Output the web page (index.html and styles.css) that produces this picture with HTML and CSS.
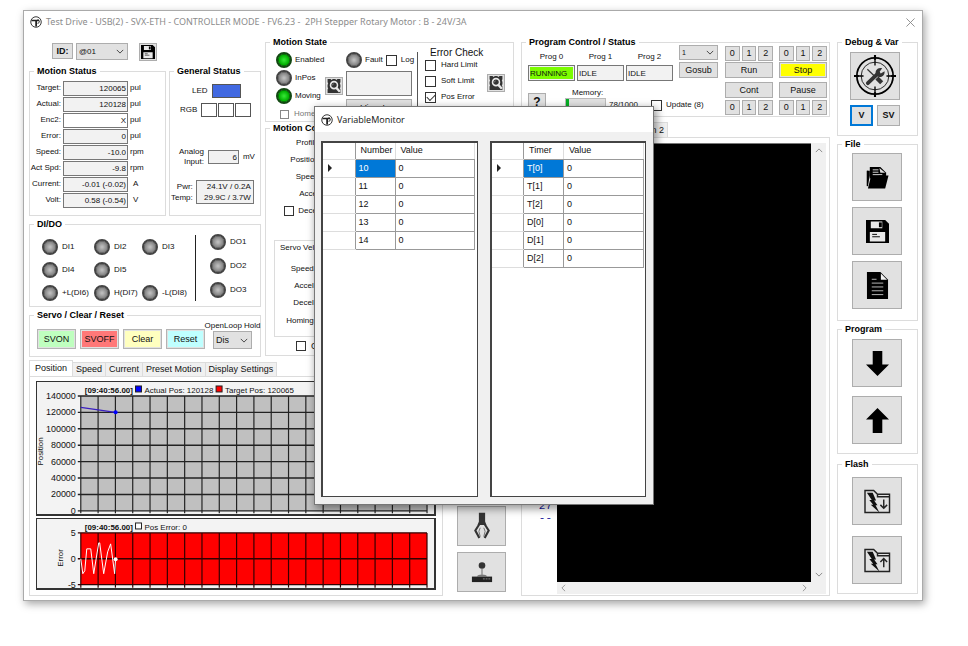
FILE: index.html
```html
<!DOCTYPE html>
<html lang="en">
<head>
<meta charset="utf-8">
<title>Test Drive</title>
<link rel="stylesheet" href="styles.css">
</head>
<body>
<svg class="sprite" aria-hidden="true">
  <symbol id="logo" viewBox="0 0 24 24"><circle cx="12" cy="12" r="10.5" fill="none" stroke="#222" stroke-width="1.8"/><path d="M3 7.500h15v3H14V21h-3.500V10.500H3z" fill="#222"/><path d="M15 7.500c5 0 5 7 0 7" fill="none" stroke="#222" stroke-width="2"/></symbol>
  <symbol id="chev" viewBox="0 0 10 6"><path d="M1 1l4 4 4-4" fill="none" stroke="#444" stroke-width="1.200"/></symbol>
  <symbol id="floppy" viewBox="0 0 24 24"><path d="M0 0h20l4 4v20H0z" fill="#000"/><path d="M5 1.500h12v7H5zM4 12.500h16v10H4z" fill="#e8e8e8"/><path d="M13.500 2.500h3v5h-3z" fill="#000"/><path d="M6.500 15h5M6.500 17.500h8" stroke="#000" stroke-width="1"/></symbol>
  <symbol id="inspect" viewBox="0 0 24 24"><path d="M1 0h5l2 1.500L10 0h4l2 1.500L18 0h5v5l-1 3 1 2v4l-1 2 1 2v6H1v-6l1-2-1-2v-4l1-2-1-3z" fill="#333"/><circle cx="12" cy="10.500" r="6" fill="none" stroke="#e8e8e8" stroke-width="2.600"/><path d="M9 11l2-3" stroke="#aaa" stroke-width="1.200"/><path d="M15.500 14.500L22 22" stroke="#e8e8e8" stroke-width="4"/></symbol>
  <symbol id="target" viewBox="0 0 44 44"><circle cx="22" cy="22" r="19" fill="none" stroke="#000" stroke-width="1.800"/><circle cx="22" cy="22" r="14.500" fill="none" stroke="#222" stroke-width="1"/><path d="M22 0v11M22 33v11M0 22h10M34 22h10" stroke="#000" stroke-width="1.400"/><path d="M22 0v5M22 39v5M0 22h5M39 22h5" stroke="#000" stroke-width="2.200"/><path d="M14.500 29.500L25.500 19" stroke="#333" stroke-width="4" stroke-linecap="round"/><path d="M29.500 14l-3 4 1.500 1.500 4-2.500c.5 3.500-2 6.500-5.500 6-3.500-.5-4.500-4-3.500-6.500 1-2 3.500-3.500 6.500-2.500z" fill="#333"/><path d="M14 15l9 8.500" stroke="#333" stroke-width="1.300"/><path d="M24 24l5 5" stroke="#333" stroke-width="4.500"/></symbol>
  <symbol id="folder" viewBox="0 0 24 24"><path d="M1.500 5v16" stroke="#000" stroke-width="1.500"/><path d="M1 5h3v5L2 20z" fill="#000"/><path d="M4 1h11l6 6v6H4z" fill="#000"/><path d="M7 4h6M7 6.500h6M7 9h10" stroke="#ddd" stroke-width="1"/><path d="M14 2l6 5h-5z" fill="#ddd"/><path d="M5 11.500h7l2-1.500h9.500L20 23.500H2z" fill="#000"/></symbol>
  <symbol id="doc" viewBox="0 0 24 28"><path d="M1 0h14l8 8v20H1z" fill="#000"/><path d="M15.500 1.500v6.500H22z" fill="#f4f4f4"/><path d="M6 7.500h5M6 11.500h12M6 15.500h12M6 19.500h12M6 23.500h12" stroke="#bbb" stroke-width="1"/></symbol>
  <symbol id="down" viewBox="0 0 24 26"><path d="M7 0h10v14h7L12 26 0 14h7z" fill="#000"/></symbol>
  <symbol id="up" viewBox="0 0 24 26"><path d="M7 26h10V12h7L12 0 0 12h7z" fill="#000"/></symbol>
  <symbol id="flash" viewBox="0 0 28 26"><path d="M1 24.500V1.500h9l4 4h12.500v19zM14 5.500V8h12.500" fill="none" stroke="#222" stroke-width="1.500"/><path d="M3 4h6l3.500 8h-2l3.500 5h-2l4 7.500-9-8h2.500l-4-5H8z" fill="#111"/></symbol>
  <symbol id="gripper" viewBox="0 0 18 30"><path d="M5.500 0h7v10l1.500 4H4l1.500-4z" fill="#333"/><path d="M6 13l-4.500 7L6 28.500M12 13l4.500 7L12 28.500" fill="none" stroke="#333" stroke-width="2.400"/><path d="M7 17l-1.500 4 1.500 6M11 17l1.500 4-1.500 6" fill="none" stroke="#666" stroke-width="1"/></symbol>
  <symbol id="joy" viewBox="0 0 24 24"><circle cx="12" cy="5" r="3.600" fill="#333"/><path d="M12 8v7" stroke="#888" stroke-width="1.400"/><path d="M6.500 17c0-3 11-3 11 0z" fill="#777"/><path d="M1 17h22v6H1z" fill="#222"/><path d="M13 19.500h8" stroke="#888" stroke-width="1" stroke-dasharray="2 1"/></symbol>
</svg>

<main class="window">
  <header class="titlebar">
    <svg class="logo"><use href="#logo"/></svg>
    <h1>Test Drive - USB(2) - SVX-ETH - CONTROLLER MODE - FV6.23 -&nbsp; 2PH Stepper Rotary Motor : B - 24V/3A</h1>
    <button class="close" aria-label="Close"><svg viewBox="0 0 10 10"><path d="M.5.5l9 9M9.500.5l-9 9" stroke="#888" fill="none"/></svg></button>
  </header>

  <div class="content">
    <div class="left">
      <div class="upper">
        <div class="status-col">
          <div class="idrow">
            <label class="idlabel" for="id">ID:</label>
            <span class="select idsel"><select id="id"><option>@01</option></select><svg><use href="#chev"/></svg></span>
            <button class="mini" aria-label="Save"><svg><use href="#floppy"/></svg></button>
          </div>
          <div class="status-row">
            <fieldset class="motion-status">
              <legend>Motion Status</legend>
              <label for="m1">Target:</label><input id="m1" readonly value="120065"><span>pul</span>
              <label for="m2">Actual:</label><input id="m2" readonly value="120128"><span>pul</span>
              <label for="m3">Enc2:</label><input id="m3" class="white" readonly value="X"><span>pul</span>
              <label for="m4">Error:</label><input id="m4" readonly value="0"><span>pul</span>
              <label for="m5">Speed:</label><input id="m5" readonly value="-10.0"><span>rpm</span>
              <label for="m6">Act Spd:</label><input id="m6" readonly value="-9.8"><span>rpm</span>
              <label for="m7">Current:</label><input id="m7" readonly value="-0.01 (-0.02)"><span class="wide">A</span>
              <label for="m8">Volt:</label><input id="m8" readonly value="0.58 (-0.54)"><span class="wide">V</span>
            </fieldset>
            <fieldset class="general">
              <legend>General Status</legend>
              <div class="ledrow"><span>LED</span><i class="swatch blue"></i></div>
              <div class="rgbrow"><span>RGB</span><i class="swatch"></i><i class="swatch"></i><i class="swatch"></i></div>
              <div class="analog"><label for="an">Analog<br>Input:</label><input id="an" readonly value="6"><span>mV</span></div>
              <div class="power"><span>Pwr:<br>Temp:</span><output>24.1V / 0.2A<br>29.9C / 3.7W</output></div>
            </fieldset>
          </div>
          <fieldset class="dido">
            <legend>DI/DO</legend>
            <div class="di">
              <span><i class="lamp"></i>DI1</span><span><i class="lamp"></i>DI2</span><span><i class="lamp"></i>DI3</span>
              <span><i class="lamp"></i>DI4</span><span><i class="lamp"></i>DI5</span><span></span>
              <span><i class="lamp"></i>+L(DI6)</span><span><i class="lamp"></i>H(DI7)</span><span><i class="lamp"></i>-L(DI8)</span>
            </div>
            <div class="do">
              <span><i class="lamp"></i>DO1</span><span><i class="lamp"></i>DO2</span><span><i class="lamp"></i>DO3</span>
            </div>
          </fieldset>
          <fieldset class="servo">
            <legend>Servo / Clear / Reset</legend>
            <button class="on">SVON</button><button class="off">SVOFF</button><button class="clear">Clear</button><button class="reset">Reset</button>
            <div class="hold"><label for="hold">OpenLoop Hold</label><span class="select"><select id="hold"><option>Dis</option></select><svg><use href="#chev"/></svg></span></div>
          </fieldset>
        </div>

        <div class="motion-col">
          <fieldset class="mstate">
            <legend>Motion State</legend>
            <div class="states">
              <span><i class="lamp green"></i>Enabled</span>
              <span><i class="lamp"></i>InPos</span>
              <span><i class="lamp green"></i>Moving</span>
              <label class="home"><input type="checkbox" disabled>Home</label>
            </div>
            <button class="mini" aria-label="Inspect state"><svg><use href="#inspect"/></svg></button>
            <div class="fault">
              <div class="faultline"><i class="lamp"></i><span>Fault</span><label><input type="checkbox">Log</label></div>
              <textarea readonly aria-label="Fault"></textarea>
              <button>View Log</button>
            </div>
            <div class="errors">
              <h2>Error Check</h2>
              <label><input type="checkbox">Hard Limit</label>
              <label><input type="checkbox">Soft Limit</label>
              <label><input type="checkbox" checked>Pos Error</label>
              <label><input type="checkbox" aria-label="Error option"></label>
            </div>
            <button class="mini" aria-label="Inspect errors"><svg><use href="#inspect"/></svg></button>
          </fieldset>
          <fieldset class="mcontrol">
            <legend>Motion Control</legend>
            <div class="rows">
              <span>Profile:</span><span>Position:</span><span>Speed:</span><span>Accel:</span>
              <label><input type="checkbox">Decel:</label>
            </div>
            <div class="velocity">
              <p>Servo Velocity</p>
              <span>Speed:</span><span>Accel:</span><span>Decel:</span><span class="homing">Homing:</span>
            </div>
            <label class="cont"><input type="checkbox">Cont</label>
          </fieldset>
        </div>
      </div>

      <div class="lower">
        <div class="charts">
          <nav class="tabs"><button class="active">Position</button><button>Speed</button><button>Current</button><button>Preset Motion</button><button>Display Settings</button></nav>
          <div class="panel" id="charts"></div>
        </div>
        <div class="tools">
          <button aria-label="Gripper"><svg class="grip"><use href="#gripper"/></svg></button>
          <button aria-label="Joystick"><svg class="joy"><use href="#joy"/></svg></button>
        </div>
      </div>
    </div>

    <div class="middle">
      <fieldset class="program">
        <legend>Program Control / Status</legend>
        <div class="progs">
          <div class="prog3">
            <label for="p0">Prog 0</label><label for="p1">Prog 1</label><label for="p2">Prog 2</label>
            <input id="p0" class="running" readonly value="RUNNING"><input id="p1" readonly value="IDLE"><input id="p2" readonly value="IDLE">
          </div>
          <div class="memory">
            <button>?</button>
            <div><label for="mem">Memory:</label><div class="memline"><progress id="mem" max="1000" value="78"></progress><span>78/1000</span></div></div>
            <label class="update"><input type="checkbox">Update (8)</label>
          </div>
        </div>
        <div class="gosub">
          <span class="select"><select aria-label="Subroutine"><option>1</option></select><svg><use href="#chev"/></svg></span>
          <button>Gosub</button>
        </div>
        <div class="ctl"><div><button>0</button><button>1</button><button>2</button></div><button>Run</button><button class="second">Cont</button><div><button>0</button><button>1</button><button>2</button></div></div>
        <div class="ctl"><div><button>0</button><button>1</button><button>2</button></div><button class="stop">Stop</button><button class="second">Pause</button><div><button>0</button><button>1</button><button>2</button></div></div>
      </fieldset>
      <nav class="progtabs"><button>Program 2</button></nav>
      <div class="editor">
        <div class="gutter"><span>27</span><span>--</span></div>
        <div class="code"></div>
        <div class="vscroll"><svg class="flip"><use href="#chev"/></svg><svg><use href="#chev"/></svg></div>
        <div class="hscroll"><svg viewBox="0 0 6 10"><path d="M5 1L1 5l4 4" fill="none" stroke="#888"/></svg><svg viewBox="0 0 6 10"><path d="M1 1l4 4-4 4" fill="none" stroke="#888"/></svg></div>
      </div>
    </div>

    <aside class="right">
      <fieldset class="debug">
        <legend>Debug &amp; Var</legend>
        <button class="big" aria-label="Debug"><svg class="tgt"><use href="#target"/></svg></button>
        <div class="vars"><button class="focus">V</button><button>SV</button></div>
      </fieldset>
      <fieldset class="file">
        <legend>File</legend>
        <button class="big" aria-label="Open"><svg><use href="#folder"/></svg></button>
        <button class="big" aria-label="Save"><svg><use href="#floppy"/></svg></button>
        <button class="big" aria-label="New"><svg class="tall"><use href="#doc"/></svg></button>
      </fieldset>
      <fieldset class="transfer">
        <legend>Program</legend>
        <button class="big" aria-label="Download"><svg class="tall"><use href="#down"/></svg></button>
        <button class="big" aria-label="Upload"><svg class="tall"><use href="#up"/></svg></button>
      </fieldset>
      <fieldset class="flash">
        <legend>Flash</legend>
        <button class="big" aria-label="Write flash"><svg class="fl" viewBox="0 0 28 26"><use href="#flash"/><path d="M20.500 11v9M17 16.500l3.500 3.500 3.500-3.500" fill="none" stroke="#222" stroke-width="1.500"/></svg></button>
        <button class="big" aria-label="Read flash"><svg class="fl" viewBox="0 0 28 26"><use href="#flash"/><path d="M20.500 20v-9M17 14.500l3.500-3.500 3.500 3.500" fill="none" stroke="#222" stroke-width="1.500"/></svg></button>
      </fieldset>
    </aside>
  </div>

  <section class="dialog" role="dialog" aria-label="VariableMonitor">
    <header><svg class="logo"><use href="#logo"/></svg><h2>VariableMonitor</h2></header>
    <div class="grids">
      <div class="frame"><table>
        <thead><tr><th></th><th>Number</th><th>Value</th></tr></thead>
        <tbody>
          <tr class="sel"><th><i class="mark"></i></th><td>10</td><td>0</td></tr>
          <tr><th></th><td>11</td><td>0</td></tr>
          <tr><th></th><td>12</td><td>0</td></tr>
          <tr><th></th><td>13</td><td>0</td></tr>
          <tr><th></th><td>14</td><td>0</td></tr>
        </tbody>
      </table></div>
      <div class="frame"><table>
        <thead><tr><th></th><th>Timer</th><th>Value</th></tr></thead>
        <tbody>
          <tr class="sel"><th><i class="mark"></i></th><td>T[0]</td><td>0</td></tr>
          <tr><th></th><td>T[1]</td><td>0</td></tr>
          <tr><th></th><td>T[2]</td><td>0</td></tr>
          <tr><th></th><td>D[0]</td><td>0</td></tr>
          <tr><th></th><td>D[1]</td><td>0</td></tr>
          <tr><th></th><td>D[2]</td><td>0</td></tr>
        </tbody>
      </table></div>
    </div>
  </section>
</main>
<script src="charts.js"></script>
</body>
</html>
```
FILE: styles.css
```css
* { box-sizing: border-box; }
body {
  margin: 0;
  padding: 10px 45px 46px 23px;
  background: #fff;
  color: #111;
  font: 8px/10px "Liberation Sans", Arial, sans-serif;
}
.sprite { position: absolute; width: 0; height: 0; }
h1, h2, p { margin: 0; font-weight: normal; }
svg { display: block; }
button, input, select, textarea { font: inherit; color: inherit; margin: 0; padding: 0; border-radius: 0; }
button {
  display: flex;
  align-items: center;
  justify-content: center;
  background: #e1e1e1;
  border: 1px solid #adadad;
  font: 9px/11px "Liberation Sans", Arial, sans-serif;
}
fieldset { --inset: 0px; margin: 0; padding: 0 0 0 var(--inset); min-width: 0; border: 1px solid #dcdcdc; }
legend { margin-left: calc(4px - var(--inset)); padding: 0 3px; font: bold 9px/12px "Liberation Sans", Arial, sans-serif; color: #000; }
input:not([type]), textarea, output { background: #f2f2f2; border: 1px solid #777; }
input:not([type]) { min-width: 0; height: 15px; }
input[type="checkbox"] { appearance: none; display: grid; place-items: center; width: 11px; height: 11px; border: 1px solid #333; background: #fff; flex: none; }
input[type="checkbox"]:checked::before { content: ""; width: 7px; height: 4px; margin-top: -2px; border: solid #333; border-width: 0 0 1px 1px; transform: rotate(-45deg); }
input[type="checkbox"]:disabled { border-color: #888; }

.window { position: relative; min-width: 900px; border: 1px solid #aaa; background: #fff; box-shadow: 2px 3px 8px rgba(0, 0, 0, .35); }
.logo { width: 12px; height: 12px; flex: none; }
.titlebar { display: flex; align-items: center; height: 22px; padding: 0 7px 0 6px; gap: 4px; }
.titlebar h1 { flex: 1; font: 9px/12px "Noto Sans", "Open Sans", sans-serif; color: #8c8c8c; }
.close { background: none; border: 0; width: 10px; height: 10px; }
.close svg { width: 9px; height: 9px; }
.content { display: grid; grid-template-columns: minmax(485px, 485fr) minmax(309px, 309fr) 81px; gap: 7px; padding: 3px 4px 4px 5px; }

.lamp {
  display: block;
  flex: none;
  width: 16px;
  height: 16px;
  border-radius: 50%;
  border: 2px solid #444;
  background: radial-gradient(circle, #bbb 0 10%, #858585 60%, #6a6a6a 66%, #bbb 72%);
}
.lamp.green { border-color: #124812; background: radial-gradient(circle, #2fe02f 0 10%, #00ad00 60%, #007800 66%, #5cb85c 74%); }

.select { display: grid; background: #e1e1e1; border: 1px solid #adadad; align-items: center; }
.select select { grid-area: 1 / 1; appearance: none; border: 0; background: none; padding-left: 2px; width: 100%; height: 100%; }
.select svg { grid-area: 1 / 1; justify-self: end; width: 8px; height: 5px; margin-right: 3px; pointer-events: none; }

.upper { display: flex; gap: 4px; }
.status-col { width: 232px; flex: none; }
.motion-col { flex: 1; }
.idrow { display: flex; gap: 3px; padding: 7px 0 4px 23px; height: 29px; }
.idlabel { width: 21px; height: 16px; background: #e1e1e1; border: 1px solid #adadad; font: bold 9px/14px "Liberation Sans", Arial, sans-serif; text-align: center; }
.idsel { width: 52px; height: 17px; margin-right: 8px; }
.mini { width: 18px; height: 18px; flex: none; }
.mini svg { width: 14px; height: 14px; }
.status-row { display: flex; gap: 3px; margin-bottom: 2px; }
.motion-status { flex: 1; display: grid; grid-template-columns: 31px 65px 1fr; grid-auto-rows: 16px; column-gap: 2px; padding: 3px 0 7px; align-items: center; }
.motion-status label { text-align: right; white-space: nowrap; justify-self: end; }
.motion-status input, .analog input { width: 100%; text-align: right; padding-right: 1px; }
.motion-status input.white { background: #fff; }
.motion-status .wide { padding-left: 3px; }
.general { width: 92px; }
.ledrow, .rgbrow, .analog, .power { display: flex; align-items: center; }
.ledrow { padding: 7px 0 0 22px; gap: 4px; }
.rgbrow { padding: 5px 0 0 10px; gap: 1px; }
.rgbrow span { margin-right: 3px; }
.swatch { display: block; width: 16px; height: 14px; border: 1px solid #555; background: #fff; }
.swatch.blue { width: 29px; background: #4169e1; }
.analog { padding: 30px 3px 0 9px; gap: 4px; }
.analog label { text-align: right; }
.analog input { width: 31px; height: 14px; flex: none; }
.power { padding: 13px 0 0 1px; gap: 3px; text-align: right; line-height: 11px; }
.power output { width: 58px; height: 24px; line-height: 11px; padding-right: 2px; }

.dido { --inset: 12px; display: flex; padding-top: 5px; padding-bottom: 4px; margin-bottom: 2px; }
.di { display: grid; grid-template-columns: 52px 48px 53px; grid-auto-rows: 23px; border-right: 1px solid #222; height: 66px; margin-right: 14px; }
.di span, .do span { display: flex; align-items: center; gap: 4px; white-space: nowrap; }
.do { display: grid; grid-auto-rows: 24px; margin-top: -5px; }
.servo { --inset: 7px; display: flex; gap: 4px; height: 48px; padding-right: 4px; padding-bottom: 7px; align-items: flex-end; }
.servo > button { width: 39px; height: 20px; flex: none; border-color: #b4b4b4; box-shadow: inset 0 0 0 1px #e1e1e1; }
.on { background: #bfffbf; }
.off { background: #ff7878; }
.clear { background: #ffffbf; }
.reset { background: #bfffff; }
.hold { flex: 1; min-width: 0; display: flex; flex-direction: column; align-items: center; white-space: nowrap; }
.hold .select { width: 39px; height: 18px; font-size: 9px; }

.mstate { --inset: 10px; display: flex; padding-top: 4px; height: 86px; }
.states { width: 49px; display: grid; grid-auto-rows: 16px; gap: 2px; }
.states span, .states label, .faultline, .errors label { display: flex; align-items: center; gap: 3px; }
.states .home { color: #777; gap: 5px; padding-left: 4px; }
.states input { width: 9px; height: 9px; }
.mstate > .mini { align-self: flex-start; margin-top: 25px; }
.fault { width: 75px; padding: 0 7px 0 3px; border-right: 1px solid #555; height: 66px; white-space: nowrap; }
.faultline label { display: flex; align-items: center; gap: 4px; }
.fault textarea { display: block; width: 66px; height: 25px; resize: none; margin: 3px 0; }
.fault button { width: 66px; height: 18px; }
.errors { padding-left: 7px; width: 69px; white-space: nowrap; }
.errors h2 { font: 10px/9px "Liberation Sans", Arial, sans-serif; padding-left: 5px; margin-top: -4px; }
.errors label { gap: 5px; height: 16px; }
.mstate > .errors + .mini { margin-top: 22px; }

.mcontrol { height: 234px; }
.rows { width: 55px; display: grid; grid-auto-rows: 17px; align-items: center; justify-items: end; }
.rows label { display: flex; align-items: center; gap: 4px; }
.velocity { border: 1px solid #dcdcdc; margin: 21px 8px 0; height: 97px; display: grid; grid-template-columns: 41px; grid-template-rows: 19px 17px 17px 17px 20px; justify-items: end; align-items: center; }
.velocity p { justify-self: start; padding-left: 5px; white-space: nowrap; margin-top: -6px; }
.cont { display: flex; gap: 5px; align-items: center; padding: 4px 0 0 30px; font-size: 9px; }
.cont input, .rows input { width: 10px; height: 10px; }

.lower { display: flex; margin-top: 3px; }
.charts { flex: 1; }
.tabs { display: flex; align-items: flex-end; height: 16px; }
.tabs button, .progtabs button { height: 14px; padding: 0 3px; border: 1px solid #dcdcdc; border-left: 0; border-bottom: 0; background: #f0f0f0; white-space: nowrap; }
.tabs button.active { height: 16px; padding: 0 5px; background: #fff; border-left: 1px solid #dcdcdc; }
.panel { border: 1px solid #dcdcdc; padding: 4px 6px 5px; display: grid; gap: 2px; }
.panel svg { width: 100%; background: #f3f3f3; border: 1px solid #333; border-right-width: 2px; border-bottom-width: 2px; }
.panel text { font: 9px "Liberation Sans", Arial, sans-serif; fill: #111; }
.panel text.key { font-size: 8px; }
.panel text.time { font-size: 8px; font-weight: bold; }
.tools { width: 71px; padding: 0 8px 4px 14px; display: flex; flex-direction: column; justify-content: flex-end; gap: 6px; }
.tools button { height: 40px; }
.grip { width: 16px; height: 28px; }
.joy { width: 22px; height: 22px; }

.middle { display: flex; flex-direction: column; min-width: 0; }
.program { --inset: 6px; display: flex; padding-bottom: 3px; height: 81px; }
.progs { flex: 1 1 145px; min-width: 0; margin-right: 6px; }
.prog3 { display: grid; grid-template-columns: repeat(3, 1fr); gap: 3px 2px; padding-top: 4px; }
.prog3 label { text-align: center; }
.prog3 input { width: 100%; height: 16px; padding-left: 1px; }
.prog3 input.running { background: #7cfc00; box-shadow: inset 0 0 0 1px #f2f2f2; }
.memory { display: flex; margin-top: 7px; gap: 19px; white-space: nowrap; }
.memory button { flex: none; width: 18px; height: 18px; margin-top: 5px; font-weight: bold; font-size: 12px; }
.memory label { display: block; padding-left: 7px; }
.memline { display: flex; align-items: center; gap: 3px; }
.memory progress { appearance: none; width: 41px; height: 14px; border: 1px solid #bbb; background: #e1e1e1; }
progress::-webkit-progress-bar { background: #e1e1e1; }
progress::-webkit-progress-value { background: #06b025; }
.memory .update { display: flex; align-items: center; gap: 4px; padding: 12px 0 0; margin-left: -6px; height: 22px; }
.gosub { width: 39px; flex: none; margin-right: 7px; }
.gosub .select { height: 15px; font-size: 7px; margin-top: -3px; margin-bottom: 2px; }
.gosub button { width: 100%; height: 16px; }
.ctl { width: 48px; flex: none; margin-right: 6px; margin-top: -2px; display: grid; grid-template-rows: 15px 16px 16px 15px; row-gap: 1px; }
.ctl + .ctl { margin-right: 2px; }
.ctl > div { display: flex; gap: 2px; }
.ctl > div button { flex: 1; }
.ctl > .second { margin-top: 3px; margin-bottom: -3px; }
.ctl > div:last-child { margin-top: 4px; margin-bottom: -4px; }
.stop { background: #ff0; box-shadow: inset 0 0 0 1px #e1e1e1; }
.progtabs { display: flex; margin-top: 5px; padding-left: 98px; }
.progtabs button { height: 15px; }
.editor { flex: 1; display: grid; grid-template: 1fr 12px / 33px 1fr 15px; border: 1px solid #dcdcdc; padding: 5px 3px 1px 2px; }
.gutter { grid-row: 1 / 3; font: 11px/12px "Liberation Mono", monospace; color: #1a1a9c; text-align: right; display: flex; flex-direction: column; padding: 357px 5px 0 0; }
.code { background: #000; border-top: 1px solid #777; }
.vscroll { background: #f0f0f0; display: flex; flex-direction: column; align-items: center; justify-content: space-between; padding: 5px 0; }
.vscroll svg { width: 8px; height: 5px; opacity: .6; }
.flip { transform: rotate(180deg); }
.hscroll { grid-column: 2 / 4; background: #f0f0f0; display: flex; align-items: center; justify-content: space-between; padding: 0 19px 0 4px; }
.hscroll svg { width: 5px; height: 8px; }

.right { display: flex; flex-direction: column; }
.right fieldset { --inset: 14px; display: flex; flex-direction: column; align-items: flex-start; }
.big { width: 50px; height: 48px; flex: none; }
.big svg { width: 23px; height: 23px; }
.big .tall { width: 23px; height: 27px; }
.big .tgt { width: 42px; height: 42px; }
.big .fl { width: 27px; height: 25px; }
.right .debug { --inset: 12px; height: 100px; padding-top: 4px; margin-bottom: 2px; }
.vars { display: flex; gap: 4px; margin-top: 5px; }
.vars button { width: 23px; height: 21px; font-weight: bold; }
.vars .focus { border: 2px solid #0078d7; }
.file { height: 183px; gap: 6px; padding-top: 3px; margin-bottom: 2px; }
.transfer { height: 131px; gap: 9px; padding-top: 4px; margin-bottom: 4px; }
.flash { height: 136px; gap: 11px; padding-top: 7px; }

.dialog { position: absolute; left: 290px; top: 95px; width: 340px; background: #f0f0f0; border: 1px solid #777; box-shadow: 2px 3px 8px 1px rgba(0, 0, 0, .4); }
.dialog header { display: flex; align-items: center; gap: 4px; height: 25px; padding-left: 6px; background: #fff; }
.dialog h2 { font: 9px/12px "Open Sans", "Noto Sans", sans-serif; }
.grids { display: grid; grid-template-columns: 1fr 1fr; gap: 12px; padding: 9px 7px 7px 6px; }
.frame { height: 356px; background: #fff; border: 1px solid #444; border-top-width: 2px; border-left-width: 2px; }
table { border-collapse: collapse; table-layout: fixed; width: 152px; font: 9px/11px "Liberation Sans", Arial, sans-serif; }
th, td { height: 18px; padding: 0 3px; border: 1px solid #999; text-align: left; font-weight: normal; }
th:first-child { width: 32px; border-left: 0; border-color: #ddd #999 #ddd #ddd; }
thead th { border-top: 0; border-right-color: #ddd; padding-left: 5px; height: 16px; }
thead th:nth-child(2) { width: 40px; padding: 0 0 0 5px; }
.sel td:nth-child(2) { background: #0078d7; color: #fff; }
.mark { display: block; width: 0; height: 0; margin-left: 2px; border: 4px solid transparent; border-left: 4px solid #222; border-right: 0; }
```
FILE: charts.js
```js
const columns = 20;
const left = 44, right = 392;

function grid(top, bottom, ys, stroke) {
  let out = '';
  for (let i = 0; i <= columns; i++) {
    const x = left + (right - left) * i / columns;
    out += `<path d="M${x} ${top}V${bottom + 3}" stroke="${stroke}" stroke-width="1.2"/>`;
  }
  ys.forEach(([y, label]) => {
    out += `<path d="M${left - 3} ${y}H${right}" stroke="${stroke}" stroke-width="1.4"/>`;
    out += `<text x="${left - 5}" y="${y + 3}" text-anchor="end">${label}</text>`;
  });
  return out;
}

const position = [140000, 120000, 100000, 80000, 60000, 40000, 20000, 0].map((v, i) => [14 + i * 16.5, v]);
const error = [5, 0, -5].map((v, i) => [14 + i * 26, v]);

document.getElementById('charts').innerHTML = `
<svg viewBox="0 0 399 133" role="img" aria-label="Position chart">
  <rect x="44" y="14" width="348" height="115.5" fill="#c0c0c0"/>
  ${grid(14, 129, position, '#222')}
  <path d="M44 25.500L79 30.500" stroke="#3a1fc0" fill="none" stroke-width="1.2"/>
  <circle cx="79" cy="30.500" r="2" fill="#00f"/>
  <text class="time" x="48" y="11">[09:40:56.00]</text>
  <rect x="99" y="4" width="6" height="6" fill="#00f" stroke="#222"/>
  <text class="key" x="108" y="11">Actual Pos: 120128</text>
  <rect x="180" y="4" width="6" height="6" fill="#f00" stroke="#222"/>
  <text class="key" x="189" y="11">Target Pos: 120065</text>
  <text class="key" transform="translate(6 84) rotate(-90)">Position</text>
</svg>
<svg viewBox="0 0 399 69" role="img" aria-label="Error chart">
  <rect x="44" y="14" width="348" height="52" fill="#f00"/>
  ${grid(14, 66, error, '#300')}
  <path d="M44 40L46 55 48 52 50 30H54L57 55 62 24H63L67 55 71 33 74 25 78 55 79 40" fill="none" stroke="#fff" stroke-width="1"/>
  <circle cx="79" cy="40.500" r="2" fill="#fff"/>
  <text class="time" x="48" y="11">[09:40:56.00]</text>
  <rect x="99" y="4" width="6" height="6" fill="#fff" stroke="#222"/>
  <text class="key" x="108" y="11">Pos Error: 0</text>
  <text class="key" transform="translate(26 48) rotate(-90)">Error</text>
</svg>`;
```
